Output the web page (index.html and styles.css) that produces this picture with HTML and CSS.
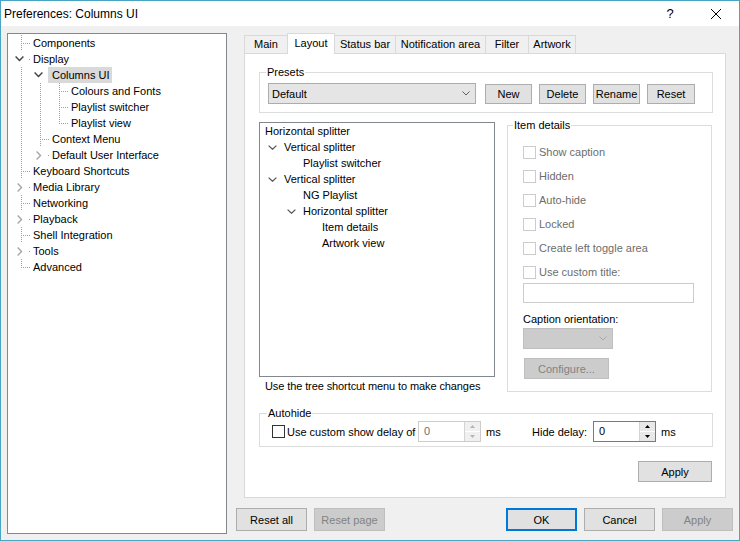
FILE: index.html
```html
<!DOCTYPE html>
<html>
<head>
<meta charset="utf-8">
<title>Preferences: Columns UI</title>
<link rel="stylesheet" href="styles.css">
</head>
<body>
<div class="window">
  <div class="titlebar">
    <span class="title">Preferences: Columns UI</span>
    <span class="tb-btn">?</span>
    <span class="tb-btn"><svg width="10" height="10" viewBox="0 0 10 10"><path d="M0 0L10 10M10 0L0 10" stroke="#000" stroke-width="1" fill="none"/></svg></span>
  </div>
  <div class="client">
    <div class="navtree">
      <div class="nrow"><span class="c t"></span><span class="lbl">Components</span></div>
      <div class="nrow"><span class="c t"><span class="exp open"><svg width="9" height="6" viewBox="0 0 9 6"><path d="M0.6 0.6L4.5 4.5L8.4 0.6" fill="none" stroke="#404040" stroke-width="1.4"/></svg></span></span><span class="lbl">Display</span></div>
      <div class="nrow"><span class="c v"></span><span class="c t"><span class="exp open"><svg width="9" height="6" viewBox="0 0 9 6"><path d="M0.6 0.6L4.5 4.5L8.4 0.6" fill="none" stroke="#404040" stroke-width="1.4"/></svg></span></span><span class="lbl sel">Columns UI</span></div>
      <div class="nrow"><span class="c v"></span><span class="c v"></span><span class="c t"></span><span class="lbl">Colours and Fonts</span></div>
      <div class="nrow"><span class="c v"></span><span class="c v"></span><span class="c t"></span><span class="lbl">Playlist switcher</span></div>
      <div class="nrow"><span class="c v"></span><span class="c v"></span><span class="c l"></span><span class="lbl">Playlist view</span></div>
      <div class="nrow"><span class="c v"></span><span class="c t"></span><span class="lbl">Context Menu</span></div>
      <div class="nrow"><span class="c v"></span><span class="c l"><span class="exp shut"><svg width="6" height="9" viewBox="0 0 6 9"><path d="M0.6 0.6L4.5 4.5L0.6 8.4" fill="none" stroke="#a6a6a6" stroke-width="1.4"/></svg></span></span><span class="lbl">Default User Interface</span></div>
      <div class="nrow"><span class="c t"></span><span class="lbl">Keyboard Shortcuts</span></div>
      <div class="nrow"><span class="c t"><span class="exp shut"><svg width="6" height="9" viewBox="0 0 6 9"><path d="M0.6 0.6L4.5 4.5L0.6 8.4" fill="none" stroke="#a6a6a6" stroke-width="1.4"/></svg></span></span><span class="lbl">Media Library</span></div>
      <div class="nrow"><span class="c t"></span><span class="lbl">Networking</span></div>
      <div class="nrow"><span class="c t"><span class="exp shut"><svg width="6" height="9" viewBox="0 0 6 9"><path d="M0.6 0.6L4.5 4.5L0.6 8.4" fill="none" stroke="#a6a6a6" stroke-width="1.4"/></svg></span></span><span class="lbl">Playback</span></div>
      <div class="nrow"><span class="c t"></span><span class="lbl">Shell Integration</span></div>
      <div class="nrow"><span class="c t"><span class="exp shut"><svg width="6" height="9" viewBox="0 0 6 9"><path d="M0.6 0.6L4.5 4.5L0.6 8.4" fill="none" stroke="#a6a6a6" stroke-width="1.4"/></svg></span></span><span class="lbl">Tools</span></div>
      <div class="nrow"><span class="c l"></span><span class="lbl">Advanced</span></div>
    </div>

    <div class="main">
      <div class="tabs">
        <div class="tab w-main">Main</div>
        <div class="tab active w-layout">Layout</div>
        <div class="tab w-status">Status bar</div>
        <div class="tab w-notif">Notification area</div>
        <div class="tab w-filter">Filter</div>
        <div class="tab w-art">Artwork</div>
      </div>
      <div class="page">
        <fieldset class="group">
          <legend class="lg-presets">Presets</legend>
          <div class="presets-row">
            <div class="combo"><span>Default</span><svg class="carrow" width="8" height="5" viewBox="0 0 8 5"><path d="M0.5 0.5L4 4L7.5 0.5" fill="none" stroke="#606060"/></svg></div>
            <button class="btn pbtn first">New</button>
            <button class="btn pbtn">Delete</button>
            <button class="btn pbtn">Rename</button>
            <button class="btn pbtn wide">Reset</button>
          </div>
        </fieldset>

        <div class="row2">
          <div class="lcol">
            <div class="ltree">
              <div class="lrow">Horizontal splitter</div>
              <div class="lrow"><span class="lexp"><svg width="9" height="5" viewBox="0 0 9 5"><path d="M0.6 0.6L4.5 4.3L8.4 0.6" fill="none" stroke="#555" stroke-width="1.2"/></svg></span>Vertical splitter</div>
              <div class="lrow"><span class="ind"></span><span class="lexp"></span>Playlist switcher</div>
              <div class="lrow"><span class="lexp"><svg width="9" height="5" viewBox="0 0 9 5"><path d="M0.6 0.6L4.5 4.3L8.4 0.6" fill="none" stroke="#555" stroke-width="1.2"/></svg></span>Vertical splitter</div>
              <div class="lrow"><span class="ind"></span><span class="lexp"></span>NG Playlist</div>
              <div class="lrow"><span class="ind"></span><span class="lexp"><svg width="9" height="5" viewBox="0 0 9 5"><path d="M0.6 0.6L4.5 4.3L8.4 0.6" fill="none" stroke="#555" stroke-width="1.2"/></svg></span>Horizontal splitter</div>
              <div class="lrow"><span class="ind"></span><span class="ind"></span><span class="lexp"></span>Item details</div>
              <div class="lrow"><span class="ind"></span><span class="ind"></span><span class="lexp"></span>Artwork view</div>
            </div>
            <div class="hint">Use the tree shortcut menu to make changes</div>
          </div>

          <fieldset class="group details">
            <legend class="lg-details">Item details</legend>
            <div class="dbody">
              <div class="chk-row dis"><span class="cb"></span>Show caption</div>
              <div class="chk-row dis"><span class="cb"></span>Hidden</div>
              <div class="chk-row dis"><span class="cb"></span>Auto-hide</div>
              <div class="chk-row dis"><span class="cb"></span>Locked</div>
              <div class="chk-row dis"><span class="cb"></span>Create left toggle area</div>
              <div class="chk-row dis"><span class="cb"></span>Use custom title:</div>
              <div class="tinput"></div>
              <div class="cap-label">Caption orientation:</div>
              <div class="combo dcombo"><svg class="carrow" width="8" height="5" viewBox="0 0 8 5"><path d="M0.5 0.5L4 4L7.5 0.5" fill="none" stroke="#a8a8a8"/></svg></div>
              <button class="btn configure" disabled>Configure...</button>
            </div>
          </fieldset>
        </div>

        <fieldset class="group autohide">
          <legend class="lg-auto">Autohide</legend>
          <div class="ah-row">
            <span class="ah-check"><span class="cb on"></span>Use custom show delay of</span>
            <span class="spin dis"><span class="sval">0</span><span class="sbtns"><span class="sb"><svg width="5" height="3" viewBox="0 0 5 3"><path d="M0 3L2.5 0L5 3Z" fill="#b5b5b5"/></svg></span><span class="sb"><svg width="5" height="3" viewBox="0 0 5 3"><path d="M0 0L2.5 3L5 0Z" fill="#b5b5b5"/></svg></span></span></span>
            <span class="unit1">ms</span>
            <span class="hd-label">Hide delay:</span>
            <span class="spin"><span class="sval">0</span><span class="sbtns"><span class="sb"><svg width="5" height="3" viewBox="0 0 5 3"><path d="M0 3L2.5 0L5 3Z" fill="#000"/></svg></span><span class="sb"><svg width="5" height="3" viewBox="0 0 5 3"><path d="M0 0L2.5 3L5 0Z" fill="#000"/></svg></span></span></span>
            <span class="unit2">ms</span>
          </div>
        </fieldset>

        <div class="apply-row"><button class="btn apply-in">Apply</button></div>
      </div>

      <div class="btnrow">
        <button class="btn">Reset all</button>
        <button class="btn" disabled>Reset page</button>
        <button class="btn default push">OK</button>
        <button class="btn">Cancel</button>
        <button class="btn" disabled>Apply</button>
      </div>
    </div>
  </div>
</div>
</body>
</html>
```

FILE: styles.css
```css
* { box-sizing: border-box; }

html, body {
  margin: 0;
  padding: 0;
  background: #ffffff;
}

body {
  font-family: "Liberation Sans", Arial, sans-serif;
  font-size: 11px;
  color: #000;
}

.window {
  width: 740px;
  height: 541px;
  border: 1px solid #4aa5c3;
  background: #f0f0f0;
  display: flex;
  flex-direction: column;
}

.titlebar {
  height: 25px;
  flex: none;
  background: #fff;
  display: flex;
  align-items: center;
  padding-left: 3px;
  font-size: 12px;
}

.title { flex: 1; }

.tb-btn {
  width: 46px;
  height: 25px;
  display: flex;
  align-items: center;
  justify-content: center;
  font-size: 13px;
}

.client {
  flex: 1;
  display: flex;
  padding: 7px 6px 0 6px;
  gap: 9px;
}

/* left navigation tree */
.navtree {
  width: 220px;
  height: 501px;
  flex: none;
  border: 1px solid #828790;
  background: #fff;
  padding: 1px 0 0 4px;
}

.nrow {
  display: flex;
  height: 16px;
  line-height: 16px;
  white-space: nowrap;
}

.c {
  position: relative;
  width: 19px;
  height: 16px;
  flex: none;
}

.c.v::before,
.c.t::before,
.c.l::before {
  content: "";
  position: absolute;
  left: 9px;
  top: 0;
  width: 1px;
  height: 16px;
  background: linear-gradient(#a0a0a0 50%, transparent 50%) 0 0 / 1px 2px repeat-y;
}

.c.l::before { height: 9px; }

.c.t::after,
.c.l::after {
  content: "";
  position: absolute;
  left: 9px;
  top: 8px;
  width: 10px;
  height: 1px;
  background: linear-gradient(to right, #a0a0a0 50%, transparent 50%) 0 0 / 2px 1px repeat-x;
}

.exp {
  position: absolute;
  left: 1px;
  top: 0;
  width: 15px;
  height: 16px;
  background: #fff;
  z-index: 1;
  display: flex;
  align-items: center;
}

.exp.open { padding-left: 2px; }
.exp.shut { padding-left: 4px; }
.exp svg { display: block; }

.lbl {
  margin-left: -2px;
  padding: 0 3px 0 4px;
  position: relative;
  z-index: 2;
}

.lbl.sel { background: #d9d9d9; }

/* right side */
.main {
  width: 497px;
  flex: none;
  display: flex;
  flex-direction: column;
}

.tabs {
  display: flex;
  align-items: flex-end;
  height: 20px;
  margin-left: 8px;
}

.tab {
  height: 18px;
  border: 1px solid #d9d9d9;
  border-bottom: 0;
  margin-right: -1px;
  background: #f0f0f0;
  line-height: 17px;
  text-align: center;
  white-space: nowrap;
}

.tab.active {
  height: 21px;
  margin-bottom: -1px;
  background: #fff;
  line-height: 19px;
  position: relative;
  z-index: 1;
}

.w-main { width: 44px; }
.w-layout { width: 48px; }
.w-status { width: 62px; }
.w-notif { width: 91px; }
.w-filter { width: 44px; }
.w-art { width: 48px; }

.page {
  margin-left: 8px;
  width: 482px;
  height: 445px;
  border: 1px solid #d9d9d9;
  background: #fff;
  padding: 12px 12px 0 14px;
}

.group {
  margin: 0;
  padding: 0;
  min-width: 0;
  border: 1px solid #dcdcdc;
}

.group legend {
  padding: 0 1px;
  line-height: 13px;
  font-size: 11px;
}

.lg-presets { margin-left: 6px; }
.lg-details { margin-left: 5px; }
.lg-auto { margin-left: 7px; }

.presets-row {
  display: flex;
  align-items: flex-start;
  padding: 4px 0 8px 8px;
}

.combo {
  width: 208px;
  height: 21px;
  border: 1px solid #acacac;
  background: #e5e5e5;
  display: flex;
  align-items: center;
  padding-left: 3px;
}

.carrow {
  margin-left: auto;
  margin-right: 5px;
  display: block;
}

.btn {
  font-family: "Liberation Sans", Arial, sans-serif;
  font-size: 11px;
  color: #000;
  background: #e1e1e1;
  border: 1px solid #adadad;
  padding: 0;
  margin: 0;
  width: 71px;
  height: 23px;
  border-radius: 0;
  outline: none;
}

.btn:disabled {
  background: #cccccc;
  border-color: #bfbfbf;
  color: #838383;
}

.btn.default {
  border: 2px solid #0078d7;
}

.pbtn {
  width: 47px;
  height: 20px;
  margin: 1px 0 0 7px;
}

.pbtn.first { margin-left: 9px; }
.pbtn.wide { width: 48px; }

.row2 {
  display: flex;
  align-items: flex-start;
  margin-top: 6px;
}

.lcol {
  width: 236px;
  flex: none;
  margin-top: 3px;
}

.ltree {
  height: 255px;
  border: 1px solid #828790;
  padding-left: 5px;
}

.lrow {
  display: flex;
  height: 16px;
  line-height: 16px;
  white-space: nowrap;
}

.ind { width: 19px; flex: none; }

.lexp {
  width: 19px;
  flex: none;
  display: flex;
  align-items: center;
  padding-left: 3px;
}

.lexp svg { display: block; }

.hint {
  margin-top: 3px;
  padding-left: 6px;
  line-height: 13px;
  white-space: nowrap;
  letter-spacing: -0.1px;
}

.details {
  width: 205px;
  height: 273px;
  flex: none;
  margin-left: 12px;
}

.dbody {
  padding: 8px 0 0 15px;
}

.chk-row {
  height: 24px;
  display: flex;
  align-items: center;
  white-space: nowrap;
}

.chk-row.dis { color: #6d6d6d; }

.cb {
  width: 13px;
  height: 13px;
  flex: none;
  border: 1px solid #cccccc;
  background: #fff;
  margin-right: 3px;
}

.cb.on {
  border-color: #333333;
  margin-right: 2px;
}

.tinput {
  width: 171px;
  height: 20px;
  margin-top: -1px;
  border: 1px solid #cccccc;
  background: #fff;
}

.cap-label {
  margin-top: 10px;
  line-height: 13px;
}

.dcombo {
  width: 90px;
  margin-top: 2px;
  background: #cccccc;
  border-color: #bfbfbf;
}

.configure {
  display: block;
  width: 85px;
  height: 21px;
  margin: 9px 0 0 1px;
}

.autohide {
  margin-top: 14px;
}

.ah-row {
  display: flex;
  align-items: center;
  height: 21px;
  margin: 1px 0 4px;
  padding-left: 12px;
  white-space: nowrap;
}

.ah-check {
  width: 146px;
  flex: none;
  display: flex;
  align-items: center;
}

.spin {
  width: 63px;
  height: 21px;
  flex: none;
  border: 1px solid #7a7a7a;
  background: #fff;
  display: flex;
}

.spin.dis {
  border-color: #cccccc;
  color: #6d6d6d;
}

.sval {
  padding-left: 5px;
  line-height: 19px;
}

.sbtns {
  margin-left: auto;
  width: 16px;
  display: flex;
  flex-direction: column;
  gap: 1px;
  border-left: 1px solid #d4d4d4;
  background: #fff;
}

.sb {
  flex: 1;
  background: #e8e8e8;
  display: flex;
  align-items: center;
  justify-content: center;
}

.spin.dis .sb { background: #f0f0f0; }
.sb svg { display: block; }

.unit1 { margin-left: 5px; width: 46px; flex: none; }
.hd-label { width: 61px; flex: none; }
.unit2 { margin-left: 5px; }

.apply-row {
  display: flex;
  justify-content: flex-end;
  margin-top: 14px;
  padding-right: 1px;
}

.apply-in {
  width: 74px;
  height: 21px;
}

.btnrow {
  display: flex;
  gap: 7px;
  margin-top: 10px;
}

.push { margin-left: auto; }
```
